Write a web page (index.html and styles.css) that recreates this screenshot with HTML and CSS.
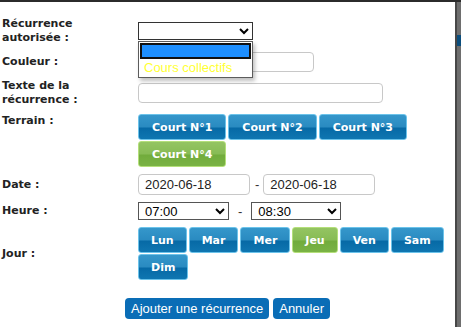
FILE: index.html
```html
<html lang="fr">
  <head>
    <title>Récurrence</title>
    <link rel="stylesheet" href="styles.css">
  </head>
  <body>
    <div class="screen">
      <div class="dialog">
        <form class="recurrence-form">
          <label class="field-label" for="recurrence">Récurrence autorisée :</label>
          <div class="field select-field">
            <select id="recurrence" class="select select-wide"><option></option></select>
            <ul class="dropdown">
              <li class="option option-empty"></li>
              <li class="option option-collectif">Cours collectifs</li>
            </ul>
          </div>

          <label class="field-label" for="couleur">Couleur :</label>
          <div class="field"><input type="text" id="couleur" class="text-input input-color"></div>

          <label class="field-label" for="texte">Texte de la récurrence :</label>
          <div class="field"><input type="text" id="texte" class="text-input input-text"></div>

          <div class="field-label label-top">Terrain :</div>
          <div class="field btn-group">
            <button type="button" class="btn btn-blue">Court N°1</button>
            <button type="button" class="btn btn-blue">Court N°2</button>
            <button type="button" class="btn btn-blue">Court N°3</button>
            <button type="button" class="btn btn-green">Court N°4</button>
          </div>

          <label class="field-label" for="date-start">Date :</label>
          <div class="field inline-field">
            <input type="text" id="date-start" class="text-input input-date" value="2020-06-18">
            <span class="sep sep-date">-</span>
            <input type="text" id="date-end" class="text-input input-date" value="2020-06-18">
          </div>

          <label class="field-label" for="hour-start">Heure :</label>
          <div class="field inline-field">
            <select id="hour-start" class="select select-hour"><option>07:00</option></select>
            <span class="sep sep-hour">-</span>
            <select id="hour-end" class="select select-hour select-hour-end"><option>08:30</option></select>
          </div>

          <div class="field-label">Jour :</div>
          <div class="field btn-group btn-group-days">
            <button type="button" class="btn btn-day btn-blue">Lun</button>
            <button type="button" class="btn btn-day btn-blue">Mar</button>
            <button type="button" class="btn btn-day btn-blue">Mer</button>
            <button type="button" class="btn btn-day btn-green">Jeu</button>
            <button type="button" class="btn btn-day btn-blue">Ven</button>
            <button type="button" class="btn btn-day btn-blue">Sam</button>
            <button type="button" class="btn btn-day btn-blue">Dim</button>
          </div>
        </form>

        <div class="actions">
          <button type="button" class="action">Ajouter une récurrence</button>
          <button type="button" class="action">Annuler</button>
        </div>
      </div>
      <div class="backdrop">
        <div class="backdrop-bar"></div>
      </div>
    </div>
  </body>
</html>
```

FILE: styles.css
```css
body {
  margin: 0;
  background: #fff;
}
.screen {
  display: flex;
  height: 327px;
  border-top: 2px solid #2b2b2b;
  box-sizing: border-box;
}
.dialog {
  width: 457px;
  background: #fff;
  border-right: 2px solid #474747;
  padding-top: 15px;
  box-sizing: border-box;
}
.backdrop {
  flex: 1;
  background: #6e6e6e;
}
.backdrop-bar {
  margin-top: 33px;
  height: 11px;
  background: #0b4d7c;
}
.recurrence-form {
  display: grid;
  grid-template-columns: 136px 1fr;
  row-gap: 7px;
  padding-left: 2px;
  align-items: center;
}
.field-label {
  font-family: "DejaVu Sans", Verdana, sans-serif;
  font-weight: bold;
  font-size: 11px;
  line-height: 14px;
  color: #222;
  padding-right: 20px;
}
.label-top {
  align-self: start;
}
.field {
  display: flex;
  align-items: center;
}
.select-field {
  position: relative;
}
.text-input {
  font-family: "Liberation Sans", Arial, sans-serif;
  font-size: 13px;
  color: #222;
  border: 1px solid #c8c8c8;
  border-radius: 4px;
  padding: 0 6px;
  box-sizing: border-box;
  outline: none;
}
.input-color {
  width: 176px;
  height: 20px;
}
.input-text {
  width: 245px;
  height: 20px;
}
.input-date {
  width: 112px;
  height: 21px;
}
.select {
  font-family: "Liberation Sans", Arial, sans-serif;
  font-size: 13px;
  color: #000;
  height: 18px;
  border: 1px solid #555;
  border-radius: 0;
  background: #fff;
  padding: 0 2px;
}
.select-wide {
  width: 115px;
  border-color: #333;
}
.select-hour {
  width: 91px;
}
.select-hour-end {
  width: 90px;
}
.sep {
  font-family: "Liberation Sans", Arial, sans-serif;
  font-size: 13px;
  color: #333;
}
.sep-date {
  margin: 0 4px 0 5px;
}
.sep-hour {
  margin: 0 9px 0 9px;
}
.dropdown {
  position: absolute;
  top: 19px;
  left: 0;
  width: 115px;
  margin: 0;
  padding: 1px;
  list-style: none;
  background: #fff;
  border: 1px solid #5c5c5c;
  box-sizing: border-box;
  box-shadow: 2px 3px 4px rgba(0, 0, 0, 0.25);
  font-family: "Liberation Sans", Arial, sans-serif;
  font-size: 13px;
}
.option {
  height: 16px;
  line-height: 16px;
  padding: 0 4px;
}
.option-empty {
  background: #1e8fff;
  border: 2px solid #111;
  height: 12px;
}
.option-collectif {
  color: #ffff33;
  padding-top: 1px;
}
.btn-group {
  flex-wrap: wrap;
  column-gap: 2px;
  row-gap: 1px;
  width: 310px;
}
.btn-group-days {
  width: 312px;
}
.btn {
  font-family: "DejaVu Sans", Verdana, sans-serif;
  font-weight: bold;
  font-size: 11px;
  color: #fff;
  height: 26px;
  padding: 0 13px;
  border-radius: 3px;
  cursor: pointer;
}
.btn-day {
  padding: 0 12px;
}
.btn-blue {
  border: 1px solid #6cc3ea;
  background: linear-gradient(to bottom, #3597cb 0%, #2a8bc1 48%, #076aa6 56%, #0f76b1 100%);
}
.btn-green {
  border: 1px solid #b4df7a;
  background: linear-gradient(to bottom, #94c462 0%, #88bc55 48%, #72ac3c 56%, #7ab345 100%);
}
.actions {
  display: flex;
  justify-content: center;
  gap: 4px;
  margin-top: 18px;
}
.action {
  font-family: "Liberation Sans", Arial, sans-serif;
  font-size: 13px;
  color: #fff;
  background: #0a6db6;
  border: none;
  border-radius: 4px;
  height: 21px;
  padding: 0 6px;
}
```
